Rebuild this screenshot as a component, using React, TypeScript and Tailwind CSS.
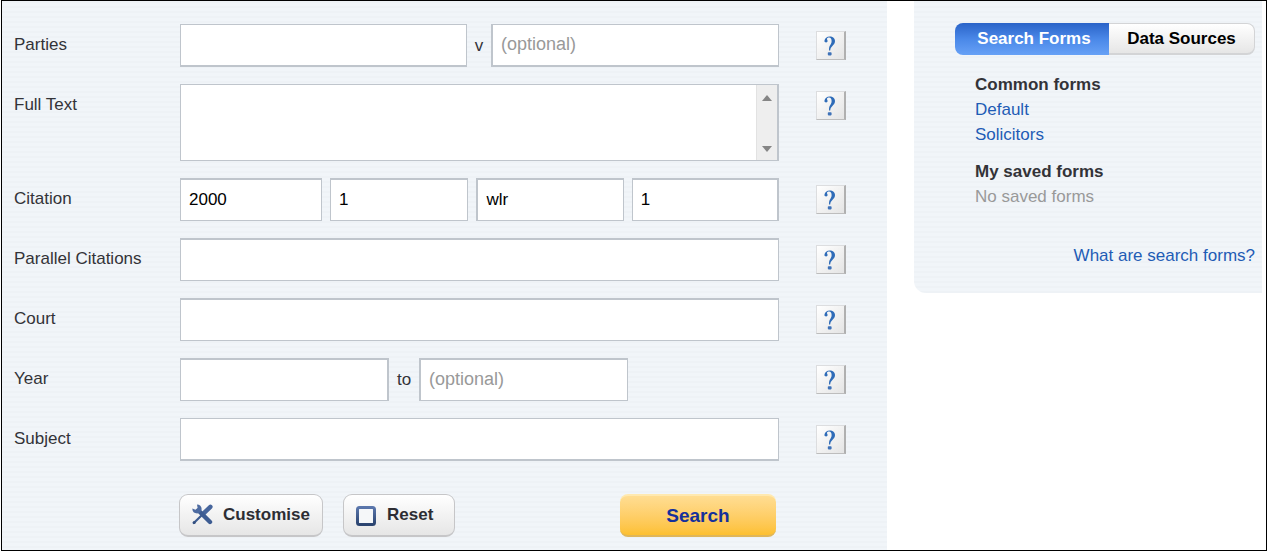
import type { ReactNode } from 'react'
import clsx from 'clsx'

const STRIPES =
  'bg-[repeating-linear-gradient(180deg,#eef2f6_0px,#eef2f6_2px,#f1f5f9_2px,#f1f5f9_5px)]'

const GREY_BUTTON =
  'flex h-[43px] items-center rounded-[9px] border border-b-2 border-[#c6c6c8] bg-linear-to-b from-white to-[#e6e6e6] pb-px font-bold text-[#2d2d33]'

const Row = ({
  label,
  htmlFor,
  children,
}: {
  label: string
  htmlFor: string
  children: ReactNode
}) => (
  <div className="flex items-start">
    <label htmlFor={htmlFor} className="flex h-10 w-[166px] shrink-0 items-center">
      {label}
    </label>
    <div className="flex min-w-0 flex-1 items-center">{children}</div>
    <button
      type="button"
      aria-label={`Help: ${label}`}
      className="mt-[7px] ml-[37px] flex h-[29px] w-[30px] shrink-0 items-center justify-center border border-r-2 border-[#dcdddf] border-r-[#b0b0b0] border-b-[#bdbdbd] bg-linear-to-br from-white to-[#e4e4e4]"
    >
      <HelpIcon />
    </button>
  </div>
)

const Field = ({
  id,
  label,
  value,
  placeholder,
  className,
}: {
  id: string
  label?: string
  value?: string
  placeholder?: string
  className?: string
}) => (
  <input
    id={id}
    type="text"
    aria-label={label}
    defaultValue={value}
    placeholder={placeholder}
    className={clsx(
      'h-[43px] min-w-0 rounded-none border border-[#bfc5cc] bg-white px-2 text-black outline-none placeholder:text-[18px] placeholder:text-[#999]',
      className
    )}
  />
)

const HelpIcon = () => (
  <svg width="14" height="22" viewBox="0 0 14 22" fill="none" className="mr-0.5" aria-hidden="true">
    <path
      d="M1.4 6C1.8 3 4 1.4 6.7 1.4C9.9 1.4 12 3.3 12 6.1C12 8.6 10.6 9.8 9.2 11.2C7.9 12.5 7.4 13.4 7.2 15.4H6C5.9 12.9 6.3 11.5 7.3 10C8.2 8.7 8.6 7.8 8.6 6.1C8.6 3.9 7.7 2.6 6.1 2.6C4.9 2.6 4 3.2 4 4C4 4.7 4.6 5.1 4.6 6C4.6 6.9 4 7.4 3.1 7.4C2.1 7.4 1.4 6.9 1.4 6Z"
      fill="#2f6cb8"
    />
    <rect x="4.8" y="17.2" width="3.8" height="3.2" rx="0.8" fill="#3f72b8" />
  </svg>
)

const ToolsIcon = () => (
  <svg width="21" height="21" viewBox="0 0 21 21" fill="none" aria-hidden="true">
    <path d="M1.8 19L10 11" stroke="#3d5c92" strokeWidth="2.2" strokeLinecap="round" />
    <circle cx="2.2" cy="18.6" r="1.5" fill="#34507f" />
    <path d="M11.6 9.4L18.4 2.8" stroke="#46659c" strokeWidth="4.4" strokeLinecap="round" />
    <path d="M6.5 6.5L18 18" stroke="#3d5c92" strokeWidth="4.4" strokeLinecap="round" />
    <path
      d="M5 0.6C8 0.6 9.9 2.8 9.6 5.6C9.2 8.6 6 10.2 3.2 9C1.2 8.2 0.2 6.4 0.4 4.4L3.4 5.8L5.6 4Z"
      fill="#4d6ba1"
    />
  </svg>
)

const ResetIcon = () => (
  <svg width="20" height="20" viewBox="0 0 20 20" fill="none" className="mt-0.5" aria-hidden="true">
    <defs>
      <linearGradient id="reset" x1="0" y1="0" x2="0" y2="1">
        <stop stopColor="#5a76ab" />
        <stop offset="1" stopColor="#2b4470" />
      </linearGradient>
    </defs>
    <rect x="1.5" y="1.5" width="17" height="17" rx="2" fill="#f5f7f9" stroke="url(#reset)" strokeWidth="3" />
  </svg>
)

export default function App() {
  return (
    <div className="ml-px flex items-start border border-black bg-white font-['Liberation_Sans',Arial,sans-serif] text-[17px] leading-[25px] text-[#333338]">
      <form
        onSubmit={(e) => e.preventDefault()}
        className={clsx('flex min-w-0 flex-1 flex-col gap-[17px] pt-[23px] pr-[41px] pb-[13px] pl-3', STRIPES)}
      >
        <Row label="Parties" htmlFor="party-one">
          <Field id="party-one" className="flex-1 border-b-2" />
          <label htmlFor="party-two" className="w-6 shrink-0 text-center">
            v
          </label>
          <Field id="party-two" placeholder="(optional)" className="flex-1 border-b-2 border-l-2" />
        </Row>

        <Row label="Full Text" htmlFor="full-text">
          <div className="flex h-[77px] flex-1 border border-r-2 border-[#bfc5cc] bg-white">
            <textarea id="full-text" className="h-full min-w-0 flex-1 resize-none px-2 py-1 outline-none" />
            <div className="flex w-[21px] flex-col items-center justify-between border-l border-[#e2e2e2] bg-[#eeeeee] pt-[10px] pb-2">
              <svg width="10" height="6" viewBox="0 0 10 6" aria-hidden="true">
                <path d="M5 0L10 6H0Z" fill="#858585" />
              </svg>
              <svg width="10" height="6" viewBox="0 0 10 6" aria-hidden="true">
                <path d="M0 0H10L5 6Z" fill="#858585" />
              </svg>
            </div>
          </div>
        </Row>

        <Row label="Citation" htmlFor="cite-year">
          <div className="flex min-w-0 flex-1 gap-2">
            <Field id="cite-year" value="2000" className="flex-[142] border-t-2" />
            <Field id="cite-volume" label="Volume" value="1" className="flex-[138] border-t-2" />
            <Field id="cite-series" label="Series" value="wlr" className="flex-[147] border-t-2 border-l-2" />
            <Field id="cite-page" label="Page" value="1" className="flex-[147] border-t-2 border-r-2" />
          </div>
        </Row>

        <Row label="Parallel Citations" htmlFor="parallel">
          <Field id="parallel" className="flex-1 border-t-2" />
        </Row>

        <Row label="Court" htmlFor="court">
          <Field id="court" className="flex-1 border-t-2" />
        </Row>

        <Row label="Year" htmlFor="year-from">
          <div className="flex min-w-0 flex-1 items-center pr-[151px]">
            <Field id="year-from" className="flex-1 border-t-2 border-r-2" />
            <label htmlFor="year-to" className="w-[30px] shrink-0 text-center">
              to
            </label>
            <Field id="year-to" placeholder="(optional)" className="flex-1 border-t-2 border-l-2" />
          </div>
        </Row>

        <Row label="Subject" htmlFor="subject">
          <Field id="subject" className="flex-1 border-b-2" />
        </Row>

        <div className="mt-4 mr-[70px] ml-[165px] flex">
          <button type="button" className={clsx(GREY_BUTTON, 'w-[144px] gap-[10px] pl-3')}>
            <ToolsIcon />
            Customise
          </button>
          <button type="reset" className={clsx(GREY_BUTTON, 'ml-5 w-[112px] gap-[11px] pl-3')}>
            <ResetIcon />
            Reset
          </button>
          <button
            type="submit"
            className="ml-auto h-[43px] w-[156px] rounded-lg border-t-2 border-b-2 border-t-[#ffe9b0] border-b-[#dfb65a] bg-linear-to-b from-[#ffdd92] to-[#fdc02f] text-[19px] font-bold text-[#15309b]"
          >
            Search
          </button>
        </div>
      </form>

      <aside className={clsx('mr-1 ml-[27px] w-[348px] shrink-0 rounded-bl-xl pt-[22px] pr-[7px] pb-[25px] pl-[41px]', STRIPES)}>
        <div className="flex h-8 font-bold">
          <button
            type="button"
            className="w-[154px] rounded-l-lg bg-linear-to-b from-[#2a63c8] via-[#4a88e8] to-[#67a1f6] pb-0.5 pl-1 text-white"
          >
            Search Forms
          </button>
          <button
            type="button"
            className="flex-1 rounded-r-lg border border-b-2 border-l-0 border-[#d3d4d6] bg-linear-to-b from-white to-[#e6e6e6] text-black"
          >
            Data Sources
          </button>
        </div>
        <div className="mt-[17px] pl-5">
          <h2 className="font-bold">Common forms</h2>
          <ul className="text-[#1f5cb5]">
            <li>
              <a href="#default">Default</a>
            </li>
            <li>
              <a href="#solicitors">Solicitors</a>
            </li>
          </ul>
          <h2 className="mt-3 font-bold">My saved forms</h2>
          <p className="text-[#999]">No saved forms</p>
        </div>
        <p className="mt-[34px] text-right text-[#1f5cb5]">
          <a href="#help">What are search forms?</a>
        </p>
      </aside>
    </div>
  )
}
